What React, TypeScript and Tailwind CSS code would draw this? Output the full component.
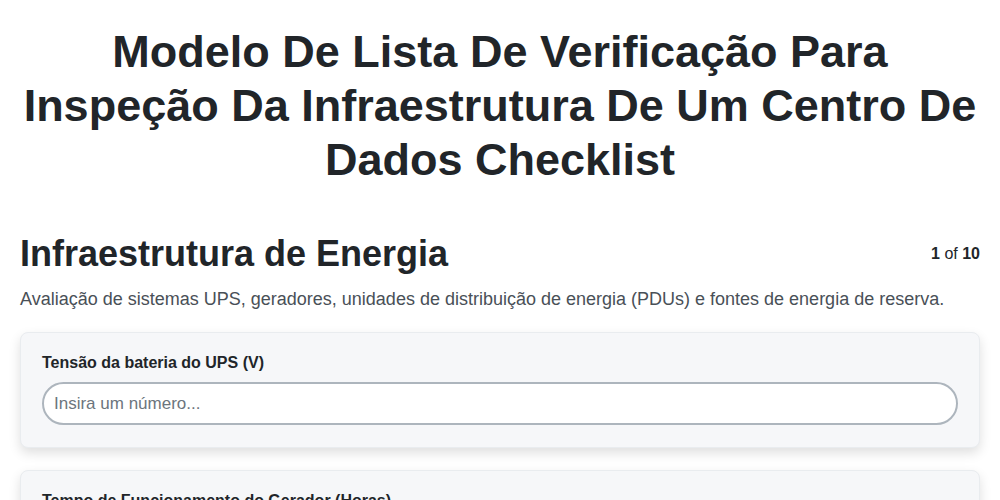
export default function App() {
  const fields = [
    { label: 'Tensão da bateria do UPS (V)', placeholder: 'Insira um número...' },
    { label: 'Tempo de Funcionamento do Gerador (Horas)', placeholder: 'Insira um número...' },
  ]

  return (
    <div className="min-h-screen bg-white px-5 font-['Liberation_Sans',Arial,sans-serif] text-[#212529]">
      <h1 className="pt-[25px] text-center text-[45px] font-bold leading-[54px]">
        Modelo De Lista De Verificação Para Inspeção Da Infraestrutura De Um Centro De Dados Checklist
      </h1>

      <div className="mt-[45px] flex items-center justify-between">
        <h2 className="text-[36px] font-bold leading-[44px]">Infraestrutura de Energia</h2>
        <div className="text-base">
          <span className="font-bold">1</span> of <span className="font-bold">10</span>
        </div>
      </div>
      <p className="mt-[10px] text-[18px] leading-[26px] text-[#495057]">
        Avaliação de sistemas UPS, geradores, unidades de distribuição de energia (PDUs) e fontes de energia de reserva.
      </p>

      <div className="mt-[20px] flex flex-col gap-[22px]">
        {fields.map((f) => (
          <div
            key={f.label}
            className="rounded-lg border border-[#e9ecef] bg-[#f6f7f9] px-[21px] pt-[18px] pb-[22px] shadow-[0_5px_12px_rgba(0,0,0,0.13)]"
          >
            <label className="block text-base font-bold leading-6 text-[#212529]">{f.label}</label>
            <input
              type="text"
              placeholder={f.placeholder}
              className="mt-[7px] h-[43px] w-full rounded-full border-2 border-[#adb5bd] bg-white px-[10px] text-[17px] text-[#212529] placeholder:text-[#6c757d] outline-none"
            />
          </div>
        ))}
      </div>
    </div>
  )
}
